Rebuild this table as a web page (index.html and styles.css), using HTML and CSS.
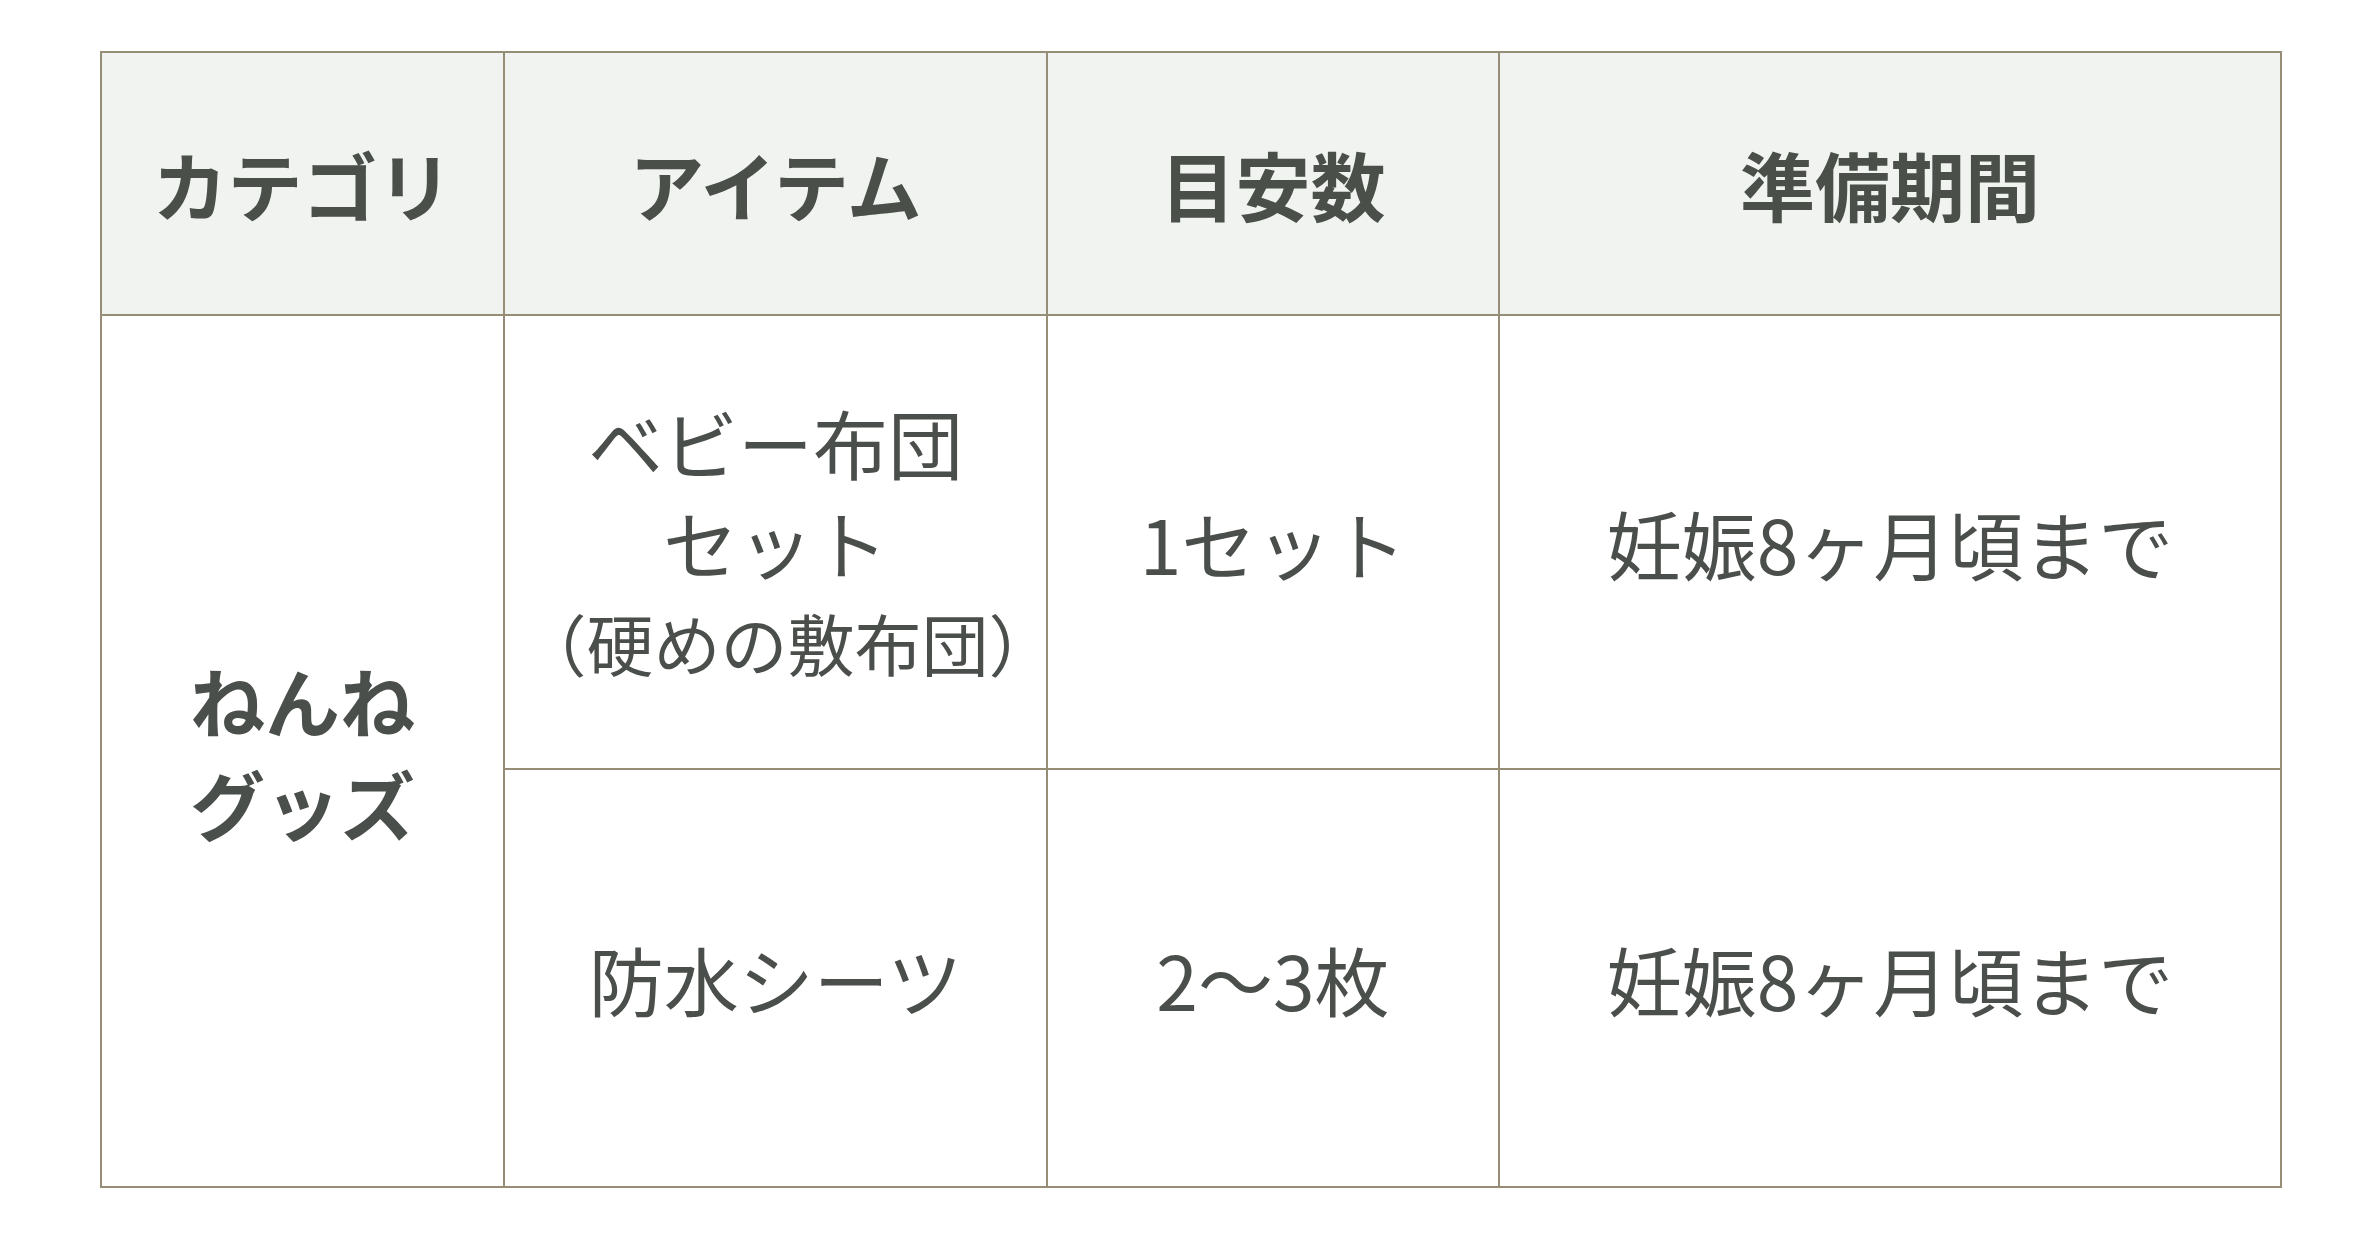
FILE: index.html
```html
<!DOCTYPE html>
<html lang="ja">
<head>
<meta charset="utf-8">
<title>ねんねグッズ</title>
<link rel="stylesheet" href="styles.css">
</head>
<body>
<div class="page">
  <table class="prep-table">
    <colgroup>
      <col class="c-cat">
      <col class="c-item">
      <col class="c-qty">
      <col class="c-period">
    </colgroup>
    <thead>
      <tr class="head-row">
        <th>カテゴリ</th>
        <th>アイテム</th>
        <th>目安数</th>
        <th>準備期間</th>
      </tr>
    </thead>
    <tbody>
      <tr class="row-1">
        <td class="cat" rowspan="2">ねんね<br>グッズ</td>
        <td class="item">ベビー布団<br>セット<span class="note">（硬めの敷布団）</span></td>
        <td>1セット</td>
        <td>妊娠8ヶ月頃まで</td>
      </tr>
      <tr class="row-2">
        <td>防水シーツ</td>
        <td>2〜3枚</td>
        <td>妊娠8ヶ月頃まで</td>
      </tr>
    </tbody>
  </table>
</div>
</body>
</html>
```

FILE: styles.css
```css
html, body {
  margin: 0;
  padding: 0;
  background: #ffffff;
}

.page {
  padding: 51px 0 0 100px;
  font-family: "Noto Sans CJK JP", "Noto Sans", sans-serif;
  color: #4b4f4b;
}

.prep-table {
  border-collapse: collapse;
  width: 2180px;
  table-layout: fixed;
}

.c-cat { width: 403px; }
.c-item { width: 543px; }
.c-qty { width: 452px; }
.c-period { width: 782px; }

.prep-table th,
.prep-table td {
  border: 2px solid #958d75;
  text-align: center;
  vertical-align: middle;
  padding: 0 20px;
  font-size: 75px;
  line-height: 1.4;
}

.prep-table th {
  background: #f0f3f0;
  font-weight: 700;
  color: #4a4f4a;
}

.prep-table td {
  font-weight: 400;
}

.head-row { height: 263px; }
.row-1 { height: 454px; }
.row-2 { height: 418px; }

.prep-table td.cat {
  font-weight: 700;
  line-height: 103px;
}

.prep-table td.item {
  line-height: 100px;
}

.note {
  display: block;
  font-size: 67px;
  line-height: 100px;
  white-space: nowrap;
  margin: 0 -20px;
  position: relative;
  left: 12px;
}
```
